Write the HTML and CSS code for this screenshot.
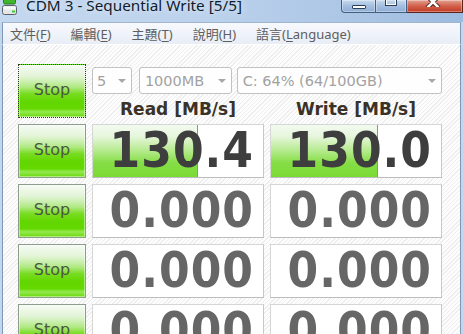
FILE: index.html
```html
<!DOCTYPE html>
<html>
<head>
<meta charset="utf-8">
<title>CDM 3</title>
<link rel="stylesheet" href="styles.css">
</head>
<body>
<div class="window">
  <div class="titlebar">
    <svg class="appicon" width="16" height="16" viewBox="0 0 16 16">
      <rect x="2.5" y="-2" width="12" height="6" rx="1.5" fill="#3fb62c" stroke="#2b7a22"/>
      <rect x="1.5" y="5.5" width="14" height="9" rx="2" fill="#e4e6e8" stroke="#5b6068"/>
      <rect x="2.5" y="6.5" width="12" height="3" fill="#f8f9fa"/>
      <rect x="11" y="10.5" width="3" height="2" fill="#3ccf2a"/>
    </svg>
    <span class="title">CDM 3 - Sequential Write [5/5]</span>
    <div class="caption">
      <div class="cbtn cmin"><span class="gmin"></span></div>
      <div class="cbtn cmax"><span class="gmax"></span></div>
      <div class="cbtn cclose">
        <svg class="gclose" width="16" height="7" viewBox="0 6 16 7">
          <path d="M3 3 L13 13 M13 3 L3 13" stroke="#4a1a10" stroke-width="4.4" stroke-linecap="round"/>
          <path d="M3 3 L13 13 M13 3 L3 13" stroke="#ffffff" stroke-width="2.6" stroke-linecap="round"/>
        </svg>
      </div>
    </div>
  </div>
  <div class="frame">
    <div class="menubar">
      <span class="mi">文件(<u>F</u>)</span>
      <span class="mi">編輯(<u>E</u>)</span>
      <span class="mi">主題(<u>T</u>)</span>
      <span class="mi">說明(<u>H</u>)</span>
      <span class="mi">語言(<u>L</u>anguage)</span>
    </div>
    <div class="client">
      <div class="grid">
        <button class="stop focused">Stop</button>
        <div class="controls">
          <div class="selects">
            <div class="combo c-count">5<i class="arrow"></i></div>
            <div class="combo c-size">1000MB<i class="arrow"></i></div>
            <div class="combo c-drive">C: 64% (64/100GB)<i class="arrow"></i></div>
          </div>
          <div class="headers">
            <div class="hdr">Read [MB/s]</div>
            <div class="hdr">Write [MB/s]</div>
          </div>
        </div>

        <button class="stop">Stop</button>
        <div class="val"><div class="fill" style="width:62%"></div><span class="num dark">130.4</span></div>
        <div class="val"><div class="fill" style="width:63%"></div><span class="num dark">130.0</span></div>

        <button class="stop">Stop</button>
        <div class="val"><span class="num">0.000</span></div>
        <div class="val"><span class="num">0.000</span></div>

        <button class="stop">Stop</button>
        <div class="val"><span class="num">0.000</span></div>
        <div class="val"><span class="num">0.000</span></div>

        <button class="stop">Stop</button>
        <div class="val"><span class="num">0.000</span></div>
        <div class="val"><span class="num">0.000</span></div>
      </div>
    </div>
  </div>
</div>
</body>
</html>
```
FILE: styles.css
```css
html, body {
  margin: 0;
  padding: 0;
}
body {
  width: 463px;
  height: 334px;
  overflow: hidden;
  background: #c3d6ec;
  font-family: "Noto Sans", "DejaVu Sans", sans-serif;
}
.window {
  display: flex;
  flex-direction: column;
  height: 334px;
}

/* ---------- title bar ---------- */
.titlebar {
  height: 22px;
  flex: none;
  display: flex;
  align-items: flex-start;
  background: linear-gradient(to right, #c4d8ef 0%, #bcd2ec 45%, #a9c4e4 80%, #9dbbe0 100%);
}
.appicon {
  flex: none;
  margin-left: 1px;
}
.title {
  margin-left: 9px;
  margin-top: -2px;
  font-size: 15.3px;
  line-height: 15px;
  color: #101c2a;
  white-space: nowrap;
  text-shadow: 0 0 6px rgba(255,255,255,0.7);
}
.caption {
  margin-left: auto;
  display: flex;
  height: 13px;
}
.cbtn {
  height: 12px;
  border: 1px solid #445e80;
  border-top: none;
  display: flex;
  justify-content: center;
  align-items: flex-start;
  box-shadow: inset 0 0 0 1px rgba(255,255,255,0.35);
}
.cmin {
  width: 33px;
  border-radius: 0 0 0 4px;
  background: linear-gradient(#c8daee, #a3bedf 50%, #8eaed6);
}
.cmax {
  width: 30px;
  border-left: none;
  background: linear-gradient(#c8daee, #a3bedf 50%, #8eaed6);
}
.cclose {
  width: 55px;
  border-left: none;
  border-color: #5c2418;
  background: linear-gradient(#e3a393, #d0604a 50%, #c23a24);
}
.gmin {
  width: 12px;
  height: 2px;
  margin-top: 5px;
  background: #fff;
  border: 1px solid #2c3f58;
  border-radius: 1px;
}
.gmax {
  width: 8px;
  height: 4px;
  margin-top: 0;
  border: 1px solid #fff;
  border-top: none;
  box-shadow: 0 0 0 1px #2c3f58;
}
.gclose {
  margin-left: -4px;
}

/* ---------- frame & menu ---------- */
.frame {
  flex: 1;
  display: flex;
  flex-direction: column;
  border-left: 2px solid #c3d6ec;
  border-right: 2px solid #c3d6ec;
  min-height: 0;
}
.menubar {
  height: 21px;
  flex: none;
  display: flex;
  align-items: center;
  gap: 20px;
  padding-left: 7px;
  border-top: 1px solid #9fb5d0;
  border-left: 1px solid #7f98b8;
  border-right: 1px solid #7f98b8;
  border-bottom: 1px solid #ffffff;
  background: linear-gradient(#f7f9fd, #e8edf6);
  font-family: "Noto Sans", "Noto Sans CJK TC", sans-serif;
  font-size: 13px;
  color: #5e5e5e;
}
.mi u {
  text-decoration-thickness: 1px;
  text-underline-offset: 2px;
}
.client {
  flex: 1;
  border-left: 1px solid #7f98b8;
  border-right: 1px solid #7f98b8;
  background: repeating-linear-gradient(135deg, #fdfdfd 0 2px, #eeeeee 2px 3px);
  overflow: hidden;
}

/* ---------- main grid ---------- */
.grid {
  display: grid;
  grid-template-columns: 68px 172px 172px;
  grid-auto-rows: 54px;
  column-gap: 6px;
  row-gap: 6px;
  padding: 19px 0 0 15px;
}
.stop {
  margin: 0;
  padding: 0 0 3px;
  border: 1px solid #8d9d8b;
  background: linear-gradient(to bottom,
    #f6faf4 0%, #e2f4d6 22%, #b2ea86 42%, #79dc22 55%,
    #62d600 70%, #64d800 84%, #93ea50 90%, #6ad80a 100%);
  font-family: "DejaVu Sans", sans-serif;
  font-size: 16px;
  color: #4b5840;
  box-shadow: inset 0 0 0 1px rgba(255,255,255,0.45);
}
.stop.focused {
  border: 1px dotted #333;
}

.controls {
  grid-column: 2 / span 2;
  display: flex;
  flex-direction: column;
}
.selects {
  margin-top: 3px;
  height: 27px;
  display: flex;
}
.combo {
  box-sizing: border-box;
  height: 27px;
  display: flex;
  align-items: center;
  padding-left: 5px;
  border: 1px solid #c2c2c2;
  border-radius: 3px;
  background: #fefefe;
  font-family: "DejaVu Sans", sans-serif;
  font-size: 14.5px;
  color: #a2a2a2;
  white-space: nowrap;
}
.c-count { width: 40px; padding-left: 4px; }
.c-size { width: 93px; margin-left: 7px; }
.c-drive { width: 206px; margin-left: 5px; }
.arrow {
  margin-left: auto;
  margin-right: 5px;
  width: 0;
  height: 0;
  border-left: 4px solid transparent;
  border-right: 4px solid transparent;
  border-top: 4px solid #a8a8a8;
}
.headers {
  display: grid;
  grid-template-columns: 172px 172px;
  column-gap: 6px;
  height: 24px;
}
.hdr {
  padding-top: 3px;
  line-height: 24px;
  text-align: center;
  font-family: "DejaVu Sans", sans-serif;
  font-weight: bold;
  font-size: 17px;
  color: #3a3226;
  white-space: nowrap;
}

.val {
  position: relative;
  display: flex;
  align-items: center;
  justify-content: flex-end;
  padding-right: 10px;
  border: 1px solid #d6d6d6;
  border-bottom-color: #bdbdbd;
  border-right-color: #c8c8c8;
  background: #ffffff;
}
.fill {
  position: absolute;
  left: 0;
  top: 0;
  bottom: 0;
  box-sizing: border-box;
  border-right: 1px solid #68b640;
  background: linear-gradient(to bottom,
    #f3faf0 0%, #e6f6dc 22%, #b4ea8c 50%, #86de46 72%, #7bda34 100%);
}
.num {
  position: relative;
  margin-right: -1px;
  font-family: "DejaVu Sans Condensed", "DejaVu Sans", sans-serif;
  font-stretch: semi-condensed;
  font-weight: bold;
  font-size: 49px;
  line-height: 48px;
  letter-spacing: 1px;
  color: #666666;
  white-space: nowrap;
}
.num.dark {
  color: #3e3e3e;
}
```
